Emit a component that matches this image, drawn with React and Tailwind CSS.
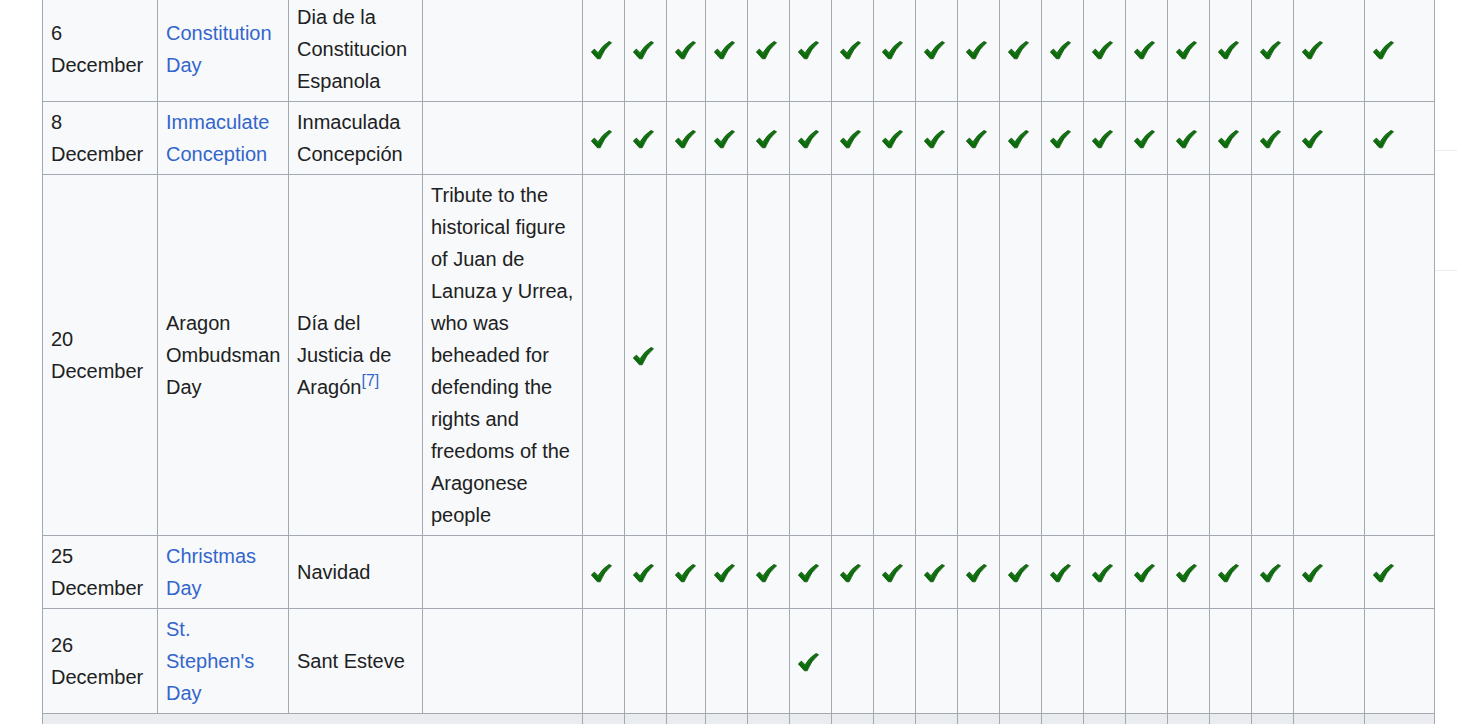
const ALL = Array.from({ length: 19 }, (_, i) => i)

const rows = [
  { date: ['6', 'December'], name: 'Constitution Day', link: true, local: 'Dia de la Constitucion Espanola', checks: ALL },
  { date: ['8', 'December'], name: 'Immaculate Conception', link: true, local: 'Inmaculada Concepción', checks: ALL },
  {
    date: ['20', 'December'],
    name: 'Aragon Ombudsman Day',
    local: 'Día del Justicia de Aragón',
    ref: '[7]',
    notes: 'Tribute to the historical figure of Juan de Lanuza y Urrea, who was beheaded for defending the rights and freedoms of the Aragonese people',
    checks: [1],
  },
  { date: ['25', 'December'], name: 'Christmas Day', link: true, local: 'Navidad', checks: ALL },
  { date: ['26', 'December'], name: "St. Stephen's Day", link: true, local: 'Sant Esteve', checks: [5] },
]

const cell = 'flex items-center border-r border-b border-[#a2a9b1] bg-[#f8f9fa] px-2 py-1 leading-8'
const foot = 'h-[40px] border-r border-b border-[#a2a9b1] bg-[#eaecf0]'

function Check() {
  return (
    <svg width="21" height="20" viewBox="0 -1 21 20" className="block mt-[2px]">
      <path
        d="M0.3 10.9 L3.4 8.1 L7.1 11.8 Q11 4.8 18 0.4 L20.6 1.7 Q13 7.8 9.2 17.8 L6.4 17.8 Z"
        fill="#0b6b0b"
        stroke="#064a06"
        strokeWidth="0.7"
        strokeLinejoin="round"
      />
      <path d="M2.2 10.6 L3.4 9.5 L7.3 13.3 Q11.6 6 17.8 1.8" fill="none" stroke="#2a9a2a" strokeWidth="0.8" opacity="0.6" />
    </svg>
  )
}

export default function App() {
  return (
    <div className="h-[724px] overflow-hidden bg-white text-[20px] text-[#202122] font-['Liberation_Sans',Arial,sans-serif]">
      <div className="flex items-start pl-[42px]">
        <div className="mt-[-3px] grid w-[1393px] border-l border-[#a2a9b1] grid-cols-[115px_131px_134px_160px_42px_42px_39px_repeat(14,42px)_71px_70px]">
          {rows.map((r, ri) => (
            <div key={ri} className="contents">
              <div className={cell}>
                <div>{r.date[0]}<br />{r.date[1]}</div>
              </div>
              <div className={cell}>
                <div className={r.link ? 'text-[#3366cc]' : ''}>{r.name}</div>
              </div>
              <div className={cell}>
                <div>
                  {r.local}
                  {r.ref && <sup className="text-[16px] text-[#3366cc]">{r.ref}</sup>}
                </div>
              </div>
              <div className={cell}>
                <div>{r.notes}</div>
              </div>
              {ALL.map(i => (
                <div key={i} className={cell}>
                  {r.checks.includes(i) && <Check />}
                </div>
              ))}
            </div>
          ))}
          <div className={`${foot} col-span-4`} />
          {ALL.map(i => <div key={i} className={foot} />)}
        </div>
        <div className="w-[22px]">
          <div className="mt-[150px] h-px bg-[#eaecf0]" />
          <div className="mt-[119px] h-px bg-[#eaecf0]" />
        </div>
      </div>
    </div>
  )
}
